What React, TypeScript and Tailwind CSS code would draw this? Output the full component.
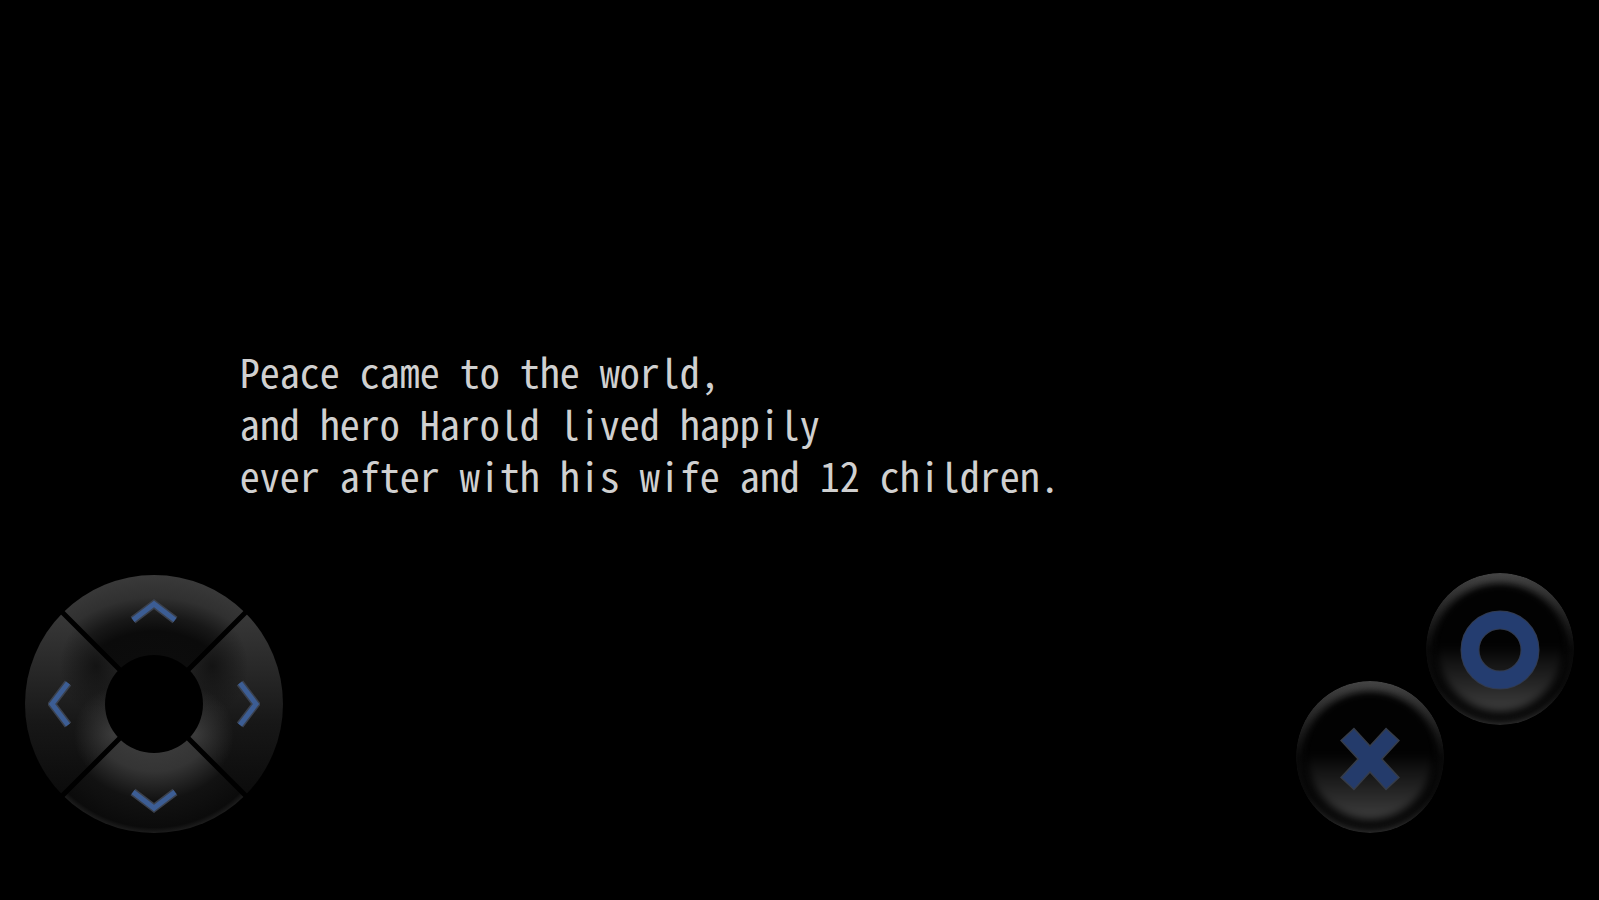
import type { ReactNode } from 'react';

const LINES = [
    'Peace came to the world,',
    'and hero Harold lived happily',
    'ever after with his wife and 12 children.',
];

function Chevron({ points, label, className, width, height }: {
    points: string;
    label: string;
    className: string;
    width: number;
    height: number;
}) {
    return (
        <button type="button" aria-label={label} className={`flex ${className}`}>
            <svg width={width} height={height} fill="none" stroke="#3b414d" strokeWidth="8">
                <polyline points={points} />
                <polyline points={points} stroke="#3c5d94" strokeWidth="5" />
            </svg>
        </button>
    );
}

function DPad() {
    return (
        <div className="relative size-[260px]">
            <svg viewBox="0 0 260 260" className="absolute inset-0 size-full" aria-hidden="true">
                <defs>
                    <radialGradient id="up" gradientUnits="userSpaceOnUse" cx="130" cy="130" r="130" gradientTransform="translate(130 130) scale(1.15 1) translate(-130 -130)">
                        <stop offset="0.36" stopColor="#0c0c0c" />
                        <stop offset="0.56" stopColor="#0b0b0b" />
                        <stop offset="0.68" stopColor="#181818" />
                        <stop offset="0.82" stopColor="#303030" />
                        <stop offset="1" stopColor="#3a3a3a" />
                    </radialGradient>
                    <linearGradient id="side" gradientUnits="userSpaceOnUse" x1="0" y1="40" x2="0" y2="222">
                        <stop offset="0" stopColor="#383838" />
                        <stop offset="0.3" stopColor="#282828" />
                        <stop offset="0.6" stopColor="#171717" />
                        <stop offset="1" stopColor="#0b0b0b" />
                    </linearGradient>
                    <radialGradient id="shade">
                        <stop offset="0" stopColor="#0e0e0e" stopOpacity="0.8" />
                        <stop offset="1" stopColor="#0e0e0e" stopOpacity="0" />
                    </radialGradient>
                    <radialGradient id="glow">
                        <stop offset="0" stopColor="#404040" stopOpacity="0.9" />
                        <stop offset="1" stopColor="#404040" stopOpacity="0" />
                    </radialGradient>
                    <radialGradient id="down" gradientUnits="userSpaceOnUse" cx="130" cy="130" r="130">
                        <stop offset="0.38" stopColor="#393939" />
                        <stop offset="0.52" stopColor="#343434" />
                        <stop offset="0.74" stopColor="#121212" />
                        <stop offset="0.95" stopColor="#0b0b0b" />
                        <stop offset="1" stopColor="#202020" />
                    </radialGradient>
                    <mask id="ring">
                        <rect width="260" height="260" fill="#000" />
                        <circle cx="130" cy="130" r="129" fill="#fff" />
                        <circle cx="130" cy="130" r="49" fill="#000" />
                        <path d="M36 36 224 224M224 36 36 224" stroke="#000" strokeWidth="5" />
                    </mask>
                </defs>
                <g mask="url(#ring)">
                    <path d="M130 130 0 0V260ZM130 130 260 0V260Z" fill="url(#side)" />
                    <ellipse cx="72" cy="92" rx="36" ry="48" fill="url(#shade)" />
                    <ellipse cx="188" cy="92" rx="36" ry="48" fill="url(#shade)" />
                    <ellipse cx="90" cy="160" rx="40" ry="46" fill="url(#glow)" />
                    <ellipse cx="170" cy="160" rx="40" ry="46" fill="url(#glow)" />
                    <path d="M130 130 0 0H260Z" fill="url(#up)" />
                    <path d="M130 130 0 260H260Z" fill="url(#down)" />
                </g>
            </svg>
            <div className="relative grid size-full grid-cols-3 grid-rows-3">
                <Chevron label="Up" className="col-start-2 row-start-1 items-start justify-center pt-6" width={48} height={26} points="3,22 24,6 45,22" />
                <Chevron label="Left" className="col-start-1 row-start-2 items-center justify-start pl-6" width={26} height={48} points="20,3 4,24 20,45" />
                <Chevron label="Right" className="col-start-3 row-start-2 items-center justify-end pr-6" width={26} height={48} points="6,3 22,24 6,45" />
                <Chevron label="Down" className="col-start-2 row-start-3 items-end justify-center pb-5" width={48} height={26} points="3,4 24,20 45,4" />
            </div>
        </div>
    );
}

function PadButton({ id, label, className, children }: {
    id: string;
    label: string;
    className: string;
    children: ReactNode;
}) {
    return (
        <button type="button" aria-label={label} className={`h-[154px] w-[150px] ${className}`}>
            <svg viewBox="0 0 150 154" className="size-full">
                <defs>
                    <linearGradient id={`${id}-rim`} x1="0" y1="0" x2="0" y2="1">
                        <stop offset="0" stopColor="#444" />
                        <stop offset="0.2" stopColor="#2c2c2c" />
                        <stop offset="0.5" stopColor="#0c0c0c" />
                        <stop offset="0.75" stopColor="#101010" />
                        <stop offset="1" stopColor="#333" />
                    </linearGradient>
                    <linearGradient id={`${id}-face`} x1="0" y1="0" x2="0" y2="1">
                        <stop offset="0.48" stopColor="#020202" />
                        <stop offset="0.56" stopColor="#0e0e0e" />
                        <stop offset="0.75" stopColor="#232323" />
                        <stop offset="1" stopColor="#3e3e3e" />
                    </linearGradient>
                    <filter id={`${id}-soft`} x="-20%" y="-20%" width="140%" height="140%" colorInterpolationFilters="sRGB">
                        <feGaussianBlur stdDeviation="4" />
                    </filter>
                    <clipPath id={`${id}-clip`}>
                        <ellipse cx="75" cy="77" rx="74" ry="76" />
                    </clipPath>
                </defs>
                <g clipPath={`url(#${id}-clip)`}>
                    <ellipse cx="75" cy="77" rx="74" ry="76" fill={`url(#${id}-rim)`} />
                    <ellipse cx="75" cy="82" rx="69" ry="68" fill="#020202" filter={`url(#${id}-soft)`} />
                    <ellipse cx="75" cy="77" rx="63" ry="63" fill={`url(#${id}-face)`} filter={`url(#${id}-soft)`} />
                </g>
                {children}
            </svg>
        </button>
    );
}

export default function App() {
    return (
        <div className="flex min-h-screen flex-col bg-black">
            <main className="flex flex-1 items-end pb-[71px] pl-[15%]">
                <p className="font-['Noto_Sans_CJK_JP',monospace] text-[40px] leading-[52px] whitespace-pre text-[#d0d0d0] [font-feature-settings:'hwid']">
                    {LINES.join('\n')}
                </p>
            </main>

            <footer className="flex items-end justify-between px-6 pb-[66px]">
                <DPad />
                <div className="flex h-[262px]">
                    <PadButton id="cross" label="Cancel" className="self-end">
                        <path d="M52 54 98 104M98 54 52 104" stroke="#363c48" strokeWidth="19" />
                        <path d="M53 55 97 103M97 55 53 103" stroke="#243b6b" strokeWidth="16" />
                    </PadButton>
                    <PadButton id="circle" label="Confirm" className="-ml-5 self-start">
                        <circle cx="75" cy="78" r="30" fill="none" stroke="#323b4f" strokeWidth="19" />
                        <circle cx="75" cy="78" r="30" fill="none" stroke="#243d70" strokeWidth="17" />
                    </PadButton>
                </div>
            </footer>
        </div>
    );
}
